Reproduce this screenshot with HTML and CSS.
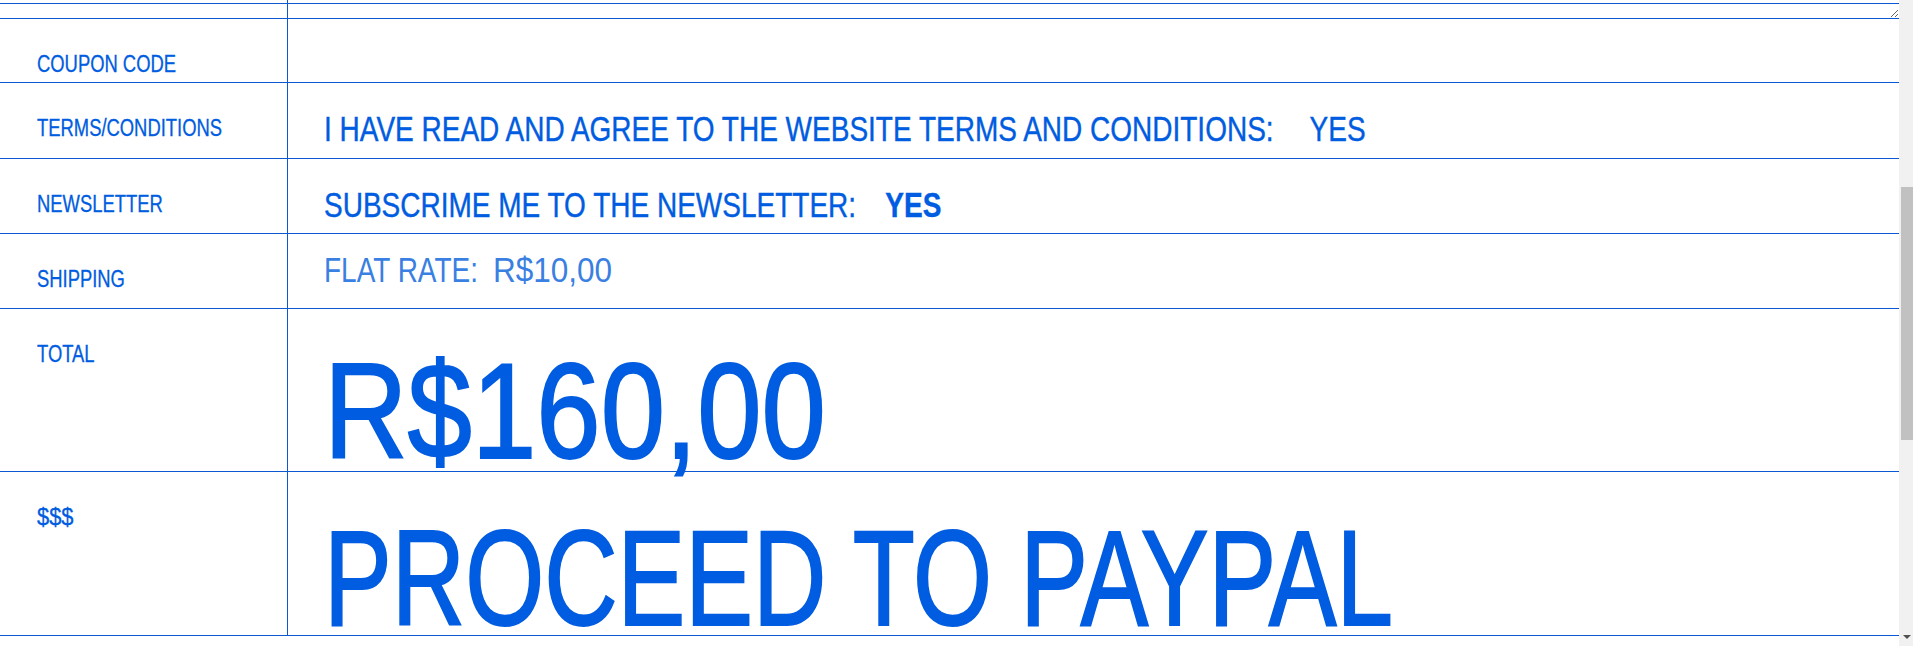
FILE: index.html
```html
<!DOCTYPE html>
<html lang="en">
<head>
<meta charset="utf-8">
<title>Checkout</title>
<link rel="stylesheet" href="styles.css">
</head>
<body>
<main class="checkout">
  <div class="row row-prev">
    <div class="label"></div>
    <div class="value"></div>
  </div>
  <div class="row row-tiny">
    <div class="label"></div>
    <div class="value value-tiny"><textarea class="note-box" aria-label="notes"></textarea></div>
  </div>
  <div class="row row-coupon">
    <div class="label"><span class="lbl">COUPON CODE</span></div>
    <div class="value"></div>
  </div>
  <div class="row row-terms">
    <div class="label"><span class="lbl">TERMS/CONDITIONS</span></div>
    <div class="value value-md"><span class="md">I HAVE READ AND AGREE TO THE WEBSITE TERMS AND CONDITIONS:<span class="answer answer-terms">YES</span></span></div>
  </div>
  <div class="row row-news">
    <div class="label"><span class="lbl">NEWSLETTER</span></div>
    <div class="value value-md"><span class="md">SUBSCRIME ME TO THE NEWSLETTER:<span class="answer answer-bold">YES</span></span></div>
  </div>
  <div class="row row-ship">
    <div class="label"><span class="lbl">SHIPPING</span></div>
    <div class="value value-ship"><span class="ship-name">FLAT RATE:</span><span class="ship-price">R$10,00</span></div>
  </div>
  <div class="row row-total">
    <div class="label"><span class="lbl">TOTAL</span></div>
    <div class="value value-xl value-total"><span class="xl-num">R$160,00</span></div>
  </div>
  <div class="row row-pay">
    <div class="label"><span class="lbl lbl-sym">$$$</span></div>
    <div class="value value-xl value-pay"><span class="xl-word">PROCEED TO PAYPAL</span></div>
  </div>
</main>
<aside class="scrollbar" aria-hidden="true">
  <div class="thumb"></div>
  <div class="arrow-down"></div>
</aside>
</body>
</html>
```
FILE: styles.css
```css
html, body {
  margin: 0;
  padding: 0;
  background: #ffffff;
}
body {
  display: flex;
  height: 100vh;
  overflow: hidden;
  font-family: "Liberation Sans", Arial, sans-serif;
  color: #005ce0;
}
.checkout {
  flex: 1;
  min-width: 0;
  display: flex;
  flex-direction: column;
}
.row {
  display: grid;
  grid-template-columns: 288px 1fr;
  border-bottom: 1px solid #0a58d2;
  box-sizing: border-box;
  flex: none;
}
.row-prev { height: 4px; }
.row-tiny { height: 15px; }
.row-coupon { height: 64px; }
.row-terms { height: 76px; }
.row-news { height: 75px; }
.row-ship { height: 75px; }
.row-total { height: 163px; }
.row-pay { height: 164px; }

.label {
  border-right: 1px solid #0a58d2;
  padding: 33.5px 0 0 37px;
  font-size: 23px;
  line-height: 23px;
  white-space: nowrap;
}
.row-prev .label,
.row-tiny .label { padding: 0; }
.lbl {
  display: inline-block;
  transform: scaleX(0.8);
  transform-origin: 0 0;
  -webkit-text-stroke: 0.3px #005ce0;
}
.lbl-sym {
  transform: scaleX(0.95);
}
.value {
  padding-left: 35.5px;
  white-space: nowrap;
  min-width: 0;
}
.value-tiny {
  padding: 0;
  display: flex;
}
.note-box {
  flex: 1;
  height: 14px;
  border: none;
  outline: none;
  margin: 0;
  padding: 0;
  background: transparent;
  font: inherit;
}
.value-md {
  font-size: 35px;
  line-height: 35px;
  padding-top: 27.5px;
}
.md {
  display: inline-block;
  transform: scaleX(0.8);
  transform-origin: 0 0;
  -webkit-text-stroke: 0.4px #005ce0;
}
.answer {
  margin-left: 36.5px;
}
.answer-terms {
  margin-left: 45px;
}
.answer-bold {
  font-weight: bold;
}
.value-ship {
  display: flex;
  font-size: 35px;
  line-height: 35px;
  padding-top: 18px;
  color: #3a7fe2;
}
.ship-name {
  display: inline-block;
  width: 169px;
  flex: none;
  transform: scaleX(0.8);
  transform-origin: 0 0;
}
.ship-price {
  display: inline-block;
  transform: scaleX(0.9);
  transform-origin: 0 0;
}
.value-xl {
  font-size: 136px;
  line-height: 100px;
}
.value-total { padding-top: 52px; }
.value-pay { padding-top: 56px; }
.xl-num {
  display: inline-block;
  transform: scaleX(0.851);
  transform-origin: 0 0;
  -webkit-text-stroke: 2px #005ce0;
}
.xl-word {
  display: inline-block;
  transform: scaleX(0.747);
  transform-origin: 0 0;
  -webkit-text-stroke: 2px #005ce0;
}

.scrollbar {
  flex: none;
  width: 14px;
  height: 100%;
  background: #f1f1f1;
  display: flex;
  flex-direction: column;
  align-items: flex-end;
}
.thumb {
  width: 12px;
  height: 253px;
  margin-top: 187px;
  background: #c1c1c1;
}
.arrow-down {
  width: 0;
  height: 0;
  margin-top: auto;
  margin-bottom: 7px;
  margin-right: 2px;
  border-left: 4px solid transparent;
  border-right: 4px solid transparent;
  border-top: 4px solid #505050;
}
```
